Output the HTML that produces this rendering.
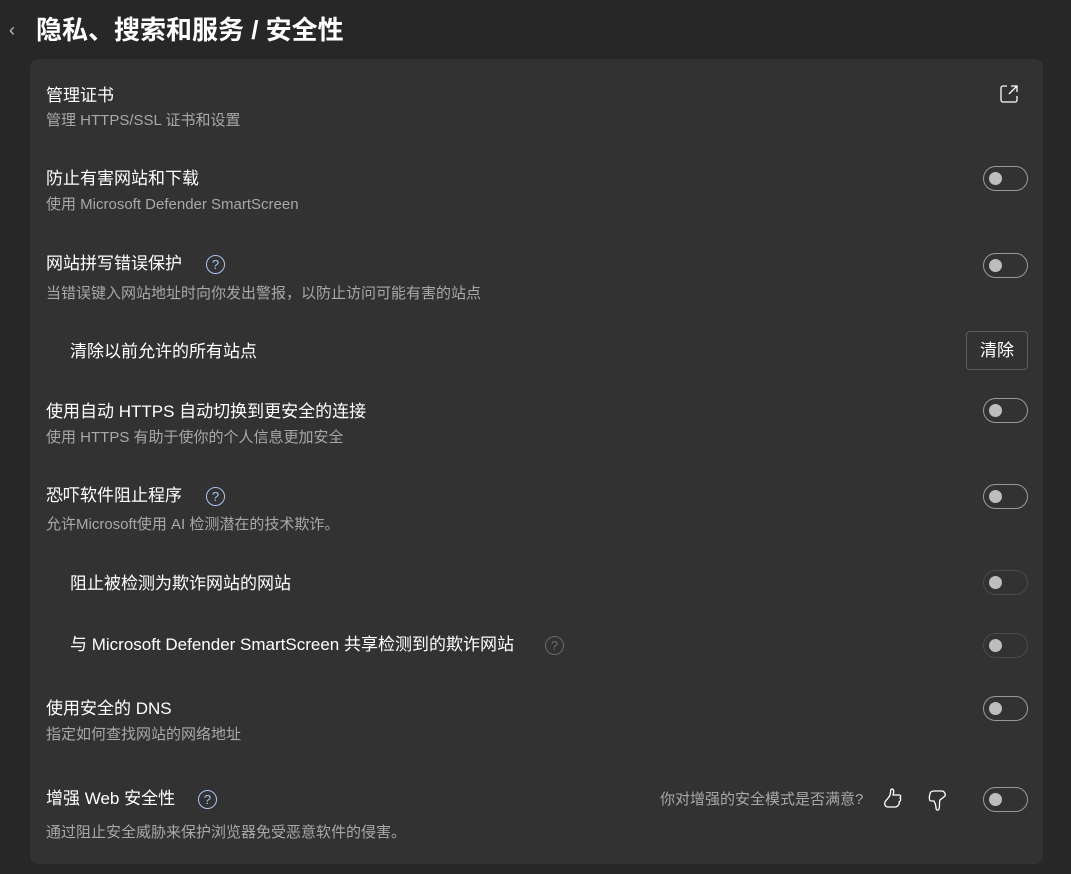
<!DOCTYPE html>
<html><head><meta charset="utf-8"><style>
body{margin:0;width:1071px;height:874px;background:#272727;font-family:"Liberation Sans","Noto Sans CJK SC",sans-serif;color:#fff;position:relative;overflow:hidden}
.a{position:absolute;white-space:nowrap;line-height:1}
.card{position:absolute;left:30px;top:59px;width:1013px;height:805px;background:#323232;border-radius:8px}
.t{font-size:17px;color:#fff}
.s{font-size:15px;color:#a8a8a8}
.tg{position:absolute;left:983px;width:43px;height:23px;border:1px solid #9a9a9a;border-radius:13px}
.tg::after{content:"";position:absolute;left:5px;top:5px;width:13px;height:13px;border-radius:50%;background:#bdbdbd}
.tg.d{border-color:#4a4a4a}
.h{position:absolute;width:19px;height:19px;border:1.5px solid #a9c6ef;border-radius:50%;color:#a9c6ef;font-size:13px;text-align:center;line-height:17px;box-sizing:border-box}
.h.d{border-color:#6a6a6a;color:#6a6a6a}
</style></head><body>
<div class="a" style="left:9px;top:21px;font-size:18px;color:#bbb">‹</div>
<div class="a" style="left:36px;top:17px;font-size:26px;font-weight:bold">隐私、搜索和服务 / 安全性</div>
<div class="card"></div>

<div class="a t" style="left:46px;top:87px">管理证书</div>
<div class="a s" style="left:46px;top:113px">管理 HTTPS/SSL 证书和设置</div>
<svg class="a" style="left:999px;top:84px" width="20" height="20" viewBox="0 0 20 20" fill="none" stroke="#fff" stroke-width="1.3"><path d="M8 2H4a2 2 0 0 0-2 2v12a2 2 0 0 0 2 2h12a2 2 0 0 0 2-2v-4"/><path d="M12 2h6v6M18 2l-8 8"/></svg>

<div class="a t" style="left:46px;top:170px">防止有害网站和下载</div>
<div class="a s" style="left:46px;top:197px">使用 Microsoft Defender SmartScreen</div>
<div class="tg" style="top:166px"></div>

<div class="a t" style="left:46px;top:255px">网站拼写错误保护</div>
<div class="h" style="left:206px;top:255px">?</div>
<div class="a s" style="left:46px;top:286px">当错误键入网站地址时向你发出警报，以防止访问可能有害的站点</div>
<div class="tg" style="top:253px"></div>

<div class="a t" style="left:70px;top:343px">清除以前允许的所有站点</div>
<div class="a" style="left:966px;top:331px;width:60px;height:37px;border:1px solid #5e5e5e;border-radius:4px;font-size:17px;text-align:center;line-height:37px">清除</div>

<div class="a t" style="left:46px;top:403px">使用自动 HTTPS 自动切换到更安全的连接</div>
<div class="a s" style="left:46px;top:430px">使用 HTTPS 有助于使你的个人信息更加安全</div>
<div class="tg" style="top:398px"></div>

<div class="a t" style="left:46px;top:487px">恐吓软件阻止程序</div>
<div class="h" style="left:206px;top:487px">?</div>
<div class="a s" style="left:46px;top:517px">允许Microsoft使用 AI 检测潜在的技术欺诈。</div>
<div class="tg" style="top:484px"></div>

<div class="a t" style="left:70px;top:575px">阻止被检测为欺诈网站的网站</div>
<div class="tg d" style="top:570px"></div>

<div class="a t" style="left:70px;top:636px">与 Microsoft Defender SmartScreen 共享检测到的欺诈网站</div>
<div class="h d" style="left:545px;top:636px">?</div>
<div class="tg d" style="top:633px"></div>

<div class="a t" style="left:46px;top:700px">使用安全的 DNS</div>
<div class="a s" style="left:46px;top:727px">指定如何查找网站的网络地址</div>
<div class="tg" style="top:696px"></div>

<div class="a t" style="left:46px;top:790px">增强 Web 安全性</div>
<div class="h" style="left:198px;top:790px">?</div>
<div class="a s" style="left:660px;top:792px">你对增强的安全模式是否满意?</div>
<svg class="a" style="left:882px;top:787px" width="22" height="24" viewBox="0 0 22 24" fill="none" stroke="#fff" stroke-width="1.3" stroke-linejoin="round"><path d="M10 2c2 0 2 3 1 6h6c2 0 2 2 1 3 1 1 1 3-1 4 1 2-1 4-3 5H6c-2 0-4-2-3-5 1-2 4-4 5-7s0-6 2-6z"/></svg>
<svg class="a" style="left:927px;top:789px" width="22" height="24" viewBox="0 0 22 24" fill="none" stroke="#fff" stroke-width="1.3" stroke-linejoin="round"><path d="M3 5c0-2 2-3 4-3h8c2 0 4 3 3 5l-5 4c-1 2 0 6-1 9-1 2-3 1-3-1 0-3-1-5-2-7H4C2 12 2 8 3 5z"/></svg>
<div class="a s" style="left:46px;top:825px">通过阻止安全威胁来保护浏览器免受恶意软件的侵害。</div>
<div class="tg" style="top:787px"></div>
</body></html>
